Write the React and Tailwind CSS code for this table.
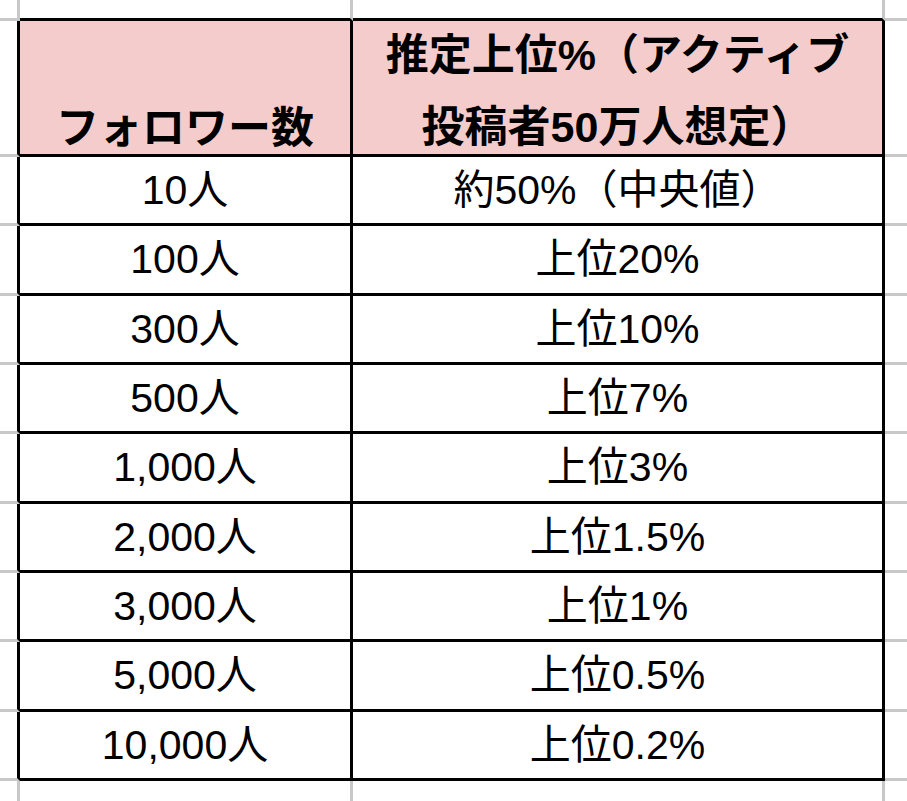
import React from "react";

const rows = [
  ["10人", "約50%（中央値）", 69],
  ["100人", "上位20%", 70],
  ["300人", "上位10%", 69],
  ["500人", "上位7%", 69],
  ["1,000人", "上位3%", 70],
  ["2,000人", "上位1.5%", 69],
  ["3,000人", "上位1%", 69],
  ["5,000人", "上位0.5%", 70],
  ["10,000人", "上位0.2%", 69],
];

const font = { fontFamily: '"Liberation Sans", "Noto Sans CJK JP", sans-serif' };

function DataRow({ a, b, h }) {
  return (
    <div className={h === 70 ? "flex h-[70px]" : "flex h-[69px]"}>
      <div className="w-[20px] shrink-0 border-r-[3px] border-b-[3px] border-r-black border-b-[#c8c8c8]" />
      <div className="w-[333px] shrink-0 border-r-[3px] border-b-[3px] border-black flex items-center justify-center text-[41px] text-black leading-none">
        {a}
      </div>
      <div className="w-[532px] shrink-0 border-r-[3px] border-b-[3px] border-black flex items-center justify-center text-[41px] text-black leading-none">
        {b}
      </div>
      <div className="flex-1 border-b-[3px] border-[#c8c8c8]" />
    </div>
  );
}

export default function App() {
  return (
    <div className="w-[907px] h-[801px] bg-white overflow-hidden flex flex-col" style={font}>
      {/* top margin row */}
      <div className="flex h-[21px]">
        <div className="w-[20px] shrink-0 border-r-[3px] border-b-[3px] border-[#c8c8c8]" />
        <div className="w-[333px] shrink-0 border-r-[3px] border-r-[#c8c8c8] border-b-[3px] border-b-black" />
        <div className="w-[532px] shrink-0 border-r-[3px] border-r-[#c8c8c8] border-b-[3px] border-b-black" />
        <div className="flex-1 border-b-[3px] border-[#c8c8c8]" />
      </div>
      {/* header row */}
      <div className="flex h-[136px]">
        <div className="w-[20px] shrink-0 border-r-[3px] border-b-[3px] border-r-black border-b-[#c8c8c8]" />
        <div className="w-[333px] shrink-0 border-r-[3px] border-b-[3px] border-black bg-[#f4cccc] flex items-end justify-center text-[43px] font-bold text-black leading-[72px]">
          <span className="-mb-[10px]">フォロワー数</span>
        </div>
        <div className="w-[532px] shrink-0 border-r-[3px] border-b-[3px] border-black bg-[#f4cccc] flex flex-col items-center justify-end text-[43px] font-bold text-black leading-[72px]">
          <div className="-mb-[9px] flex flex-col items-center">
            <span>推定上位%（アクティブ</span>
            <span>投稿者50万人想定）</span>
          </div>
        </div>
        <div className="flex-1 border-b-[3px] border-[#c8c8c8]" />
      </div>
      {rows.map(([a, b, h]) => (
        <DataRow key={a} a={a} b={b} h={h} />
      ))}
      {/* bottom margin row */}
      <div className="flex flex-1">
        <div className="w-[20px] shrink-0 border-r-[3px] border-[#c8c8c8]" />
        <div className="w-[333px] shrink-0 border-r-[3px] border-[#c8c8c8]" />
        <div className="w-[532px] shrink-0 border-r-[3px] border-[#c8c8c8]" />
        <div className="flex-1" />
      </div>
    </div>
  );
}
